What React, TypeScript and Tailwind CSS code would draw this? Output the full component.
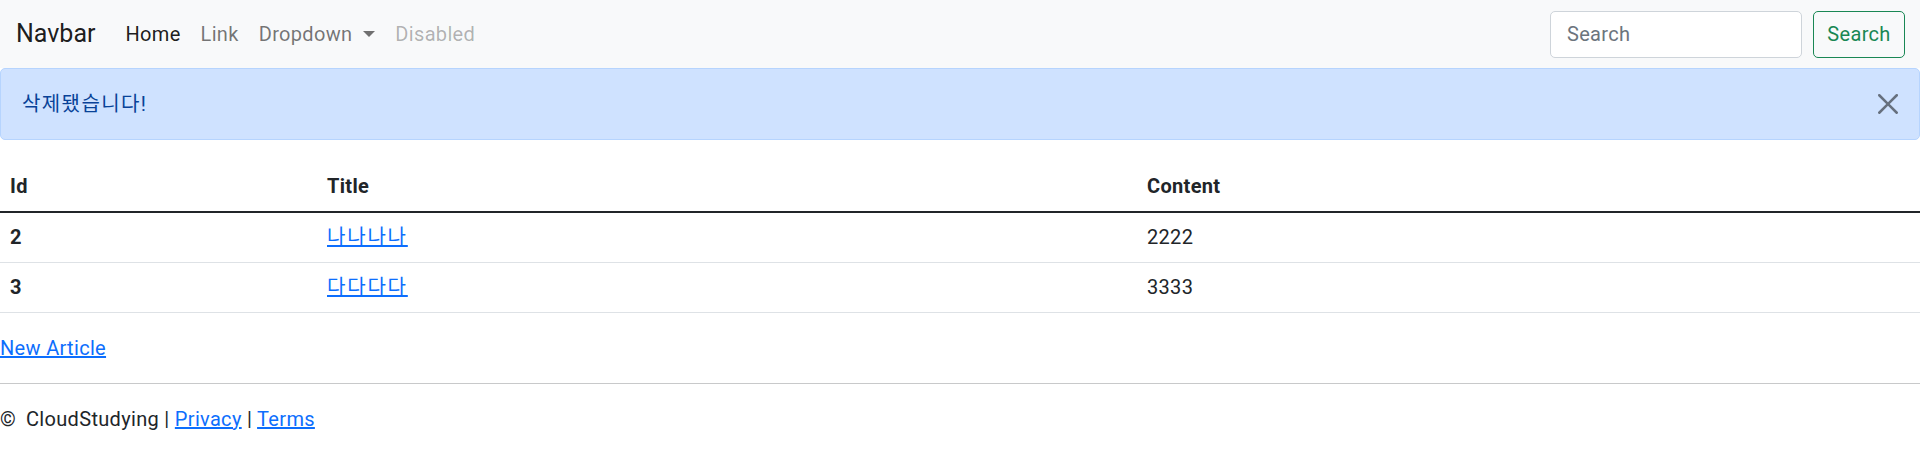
const font = "font-['Roboto','Noto_Sans_CJK_KR',sans-serif] tracking-[0.02em]";

type Article = { id: number; title: string; content: string };

const articles: Article[] = [
  { id: 2, title: "나나나나", content: "2222" },
  { id: 3, title: "다다다다", content: "3333" },
];

function Navbar() {
  return (
    <nav className="h-[68px] bg-[#f8f9fa] flex items-center justify-between px-[15px]">
      <div className="flex items-center">
        <a href="#" className="text-[25px] leading-[38px] text-black/90 mr-[20px] pl-px tracking-normal">
          Navbar
        </a>
        <ul className="flex items-center text-[20px] leading-[30px]">
          <li>
            <a href="#" className="block px-[10px] text-black/90">
              Home
            </a>
          </li>
          <li>
            <a href="#" className="block px-[10px] text-black/55">
              Link
            </a>
          </li>
          <li>
            <a href="#" className="flex items-center px-[10px] text-black/55">
              Dropdown
              <span className="ml-[11px] w-0 h-0 border-x-[6px] border-x-transparent border-t-[6px] border-t-[#707070]" />
            </a>
          </li>
          <li>
            <span className="block px-[10px] text-black/30">Disabled</span>
          </li>
        </ul>
      </div>
      <form className="flex items-center" onSubmit={(e) => e.preventDefault()}>
        <input
          type="search"
          placeholder="Search"
          className="w-[252px] h-[47px] mr-[11px] rounded-[5px] border border-[#ced4da] bg-white px-[16px] text-[20px] text-[#212529] placeholder:text-[#6c757d] outline-none"
        />
        <button
          type="submit"
          className="w-[92px] h-[47px] rounded-[5px] border border-[#198754] text-[#198754] text-[20px] leading-[30px]"
        >
          Search
        </button>
      </form>
    </nav>
  );
}

function Alert() {
  return (
    <div className="h-[72px] mb-[20px] flex items-center justify-between rounded-[5px] border border-[#b6d4fe] bg-[#cfe2ff] pl-[21px] pr-[21px] text-[#084298] text-[20px] leading-[30px]">
      <span className="tracking-[0.07em]">삭제됐습니다!</span>
      <button type="button" className="opacity-50 text-black">
        <svg width="20" height="20" viewBox="0 0 16 16" fill="currentColor">
          <path d="M.293.293a1 1 0 0 1 1.414 0L8 6.586 14.293.293a1 1 0 1 1 1.414 1.414L9.414 8l6.293 6.293a1 1 0 0 1-1.414 1.414L8 9.414l-6.293 6.293a1 1 0 0 1-1.414-1.414L6.586 8 .293 1.707a1 1 0 0 1 0-1.414z" />
        </svg>
      </button>
    </div>
  );
}

function ArticleTable() {
  return (
    <table className="w-full table-fixed border-collapse text-[20px] leading-[30px] text-[#212529]">
      <thead>
        <tr className="h-[52px] border-b-2 border-[#212529]">
          <th className="w-[317px] px-[10px] text-left font-bold">Id</th>
          <th className="w-[820px] px-[10px] text-left font-bold">Title</th>
          <th className="px-[10px] text-left font-bold">Content</th>
        </tr>
      </thead>
      <tbody>
        {articles.map((a) => (
          <tr key={a.id} className="h-[50px] border-b border-[#dee2e6]">
            <th className="px-[10px] text-left font-bold">{a.id}</th>
            <td className="px-[10px]">
              <a href="#" className="text-[#0d6efd] underline tracking-[0.09em]">
                {a.title}
              </a>
            </td>
            <td className="px-[10px]">{a.content}</td>
          </tr>
        ))}
      </tbody>
    </table>
  );
}

export default function App() {
  return (
    <div className={`${font} bg-white min-h-screen text-[#212529]`}>
      <Navbar />
      <Alert />
      <ArticleTable />
      <div className="mt-[20px] text-[20px] leading-[30px]">
        <a href="#" className="text-[#0d6efd] underline">
          New Article
        </a>
      </div>
      <hr className="my-[20px] border-0 border-t border-[#c8c9ca]" />
      <footer className="text-[20px] leading-[30px]">
        <span className="inline-block w-[26px]">©</span>CloudStudying |{" "}
        <a href="#" className="text-[#0d6efd] underline">
          Privacy
        </a>{" "}
        |{" "}
        <a href="#" className="text-[#0d6efd] underline">
          Terms
        </a>
      </footer>
    </div>
  );
}
